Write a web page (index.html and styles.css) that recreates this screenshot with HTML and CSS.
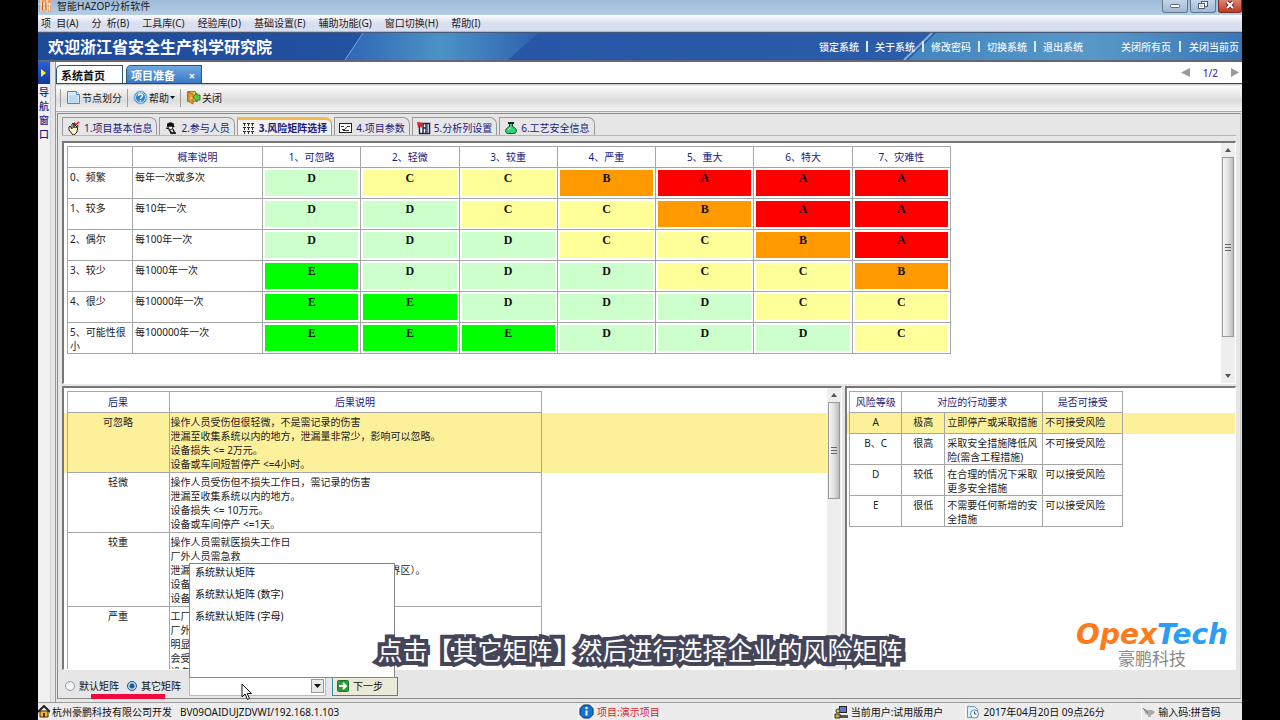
FILE: index.html
```html
<!DOCTYPE html>
<html lang="zh-CN">
<head>
<meta charset="utf-8">
<title>智能HAZOP分析软件</title>
<link rel="stylesheet" href="styles.css">
</head>
<body>
<div class="app">
  <header class="titlebar">
    <svg class="app-icon" width="12" height="12" viewBox="0 0 12 12"><rect width="12" height="12" fill="#e9a06c"/><path d="M2 0v12M5 2v9M8 0v12M10.500 3v8M0 4h12M3 8h8" stroke="#fff0dd" stroke-width="1" fill="none"/><path d="M3.500 2v8M7 3v7" stroke="#b65b2a" fill="none"/></svg>
    <h1 class="title">智能HAZOP分析软件</h1>
    <div class="winbtns">
      <button class="winbtn" aria-label="最小化"><svg width="12" height="10" viewBox="0 0 12 10"><rect x="1.500" y="4.500" width="9" height="3" rx="1" fill="#fff" stroke="#56657a"/></svg></button>
      <button class="winbtn" aria-label="还原"><svg width="12" height="10" viewBox="0 0 12 10"><g fill="#fff" stroke="#4d5c70"><rect x="4.500" y="1.500" width="6" height="5"/><rect x="1.500" y="3.500" width="6" height="5"/><path d="M3.500 6h2"/></g></svg></button>
      <button class="winbtn close" aria-label="关闭窗口"><svg width="12" height="10" viewBox="0 0 12 10"><path d="M3 2l6 6M9 2L3 8" stroke="#6b2a22" stroke-width="4"/><path d="M3 2l6 6M9 2L3 8" stroke="#fff" stroke-width="2"/></svg></button>
    </div>
  </header>
  <nav class="menubar">
    <button>项&nbsp; 目(A)</button><button>分&nbsp; 析(B)</button><button>工具库(C)</button><button>经验库(D)</button><button>基础设置(E)</button><button>辅助功能(G)</button><button>窗口切换(H)</button><button>帮助(I)</button>
  </nav>
  <section class="banner">
    <svg class="banner-art" viewBox="0 0 1204 28" preserveAspectRatio="none">
      <defs><linearGradient id="sky"><stop offset="0" stop-color="#2f66b4"/><stop offset=".5" stop-color="#4c92c6"/><stop offset="1" stop-color="#2e62ae"/></linearGradient>
      <linearGradient id="sky2"><stop offset="0" stop-color="#4385bf"/><stop offset=".55" stop-color="#5898c8"/><stop offset="1" stop-color="#3a77b7"/></linearGradient></defs>
      <path d="M307 28L325 0H500L470 28z" fill="url(#sky)"/><path d="M307 28L325 0" stroke="#7fa9d8"/>
      <path d="M870 28L898 0H1204V28z" fill="url(#sky2)"/><path d="M866 28L894 0" stroke="#83b1dc" stroke-width="2"/>
    </svg>
    <h2>欢迎浙江省安全生产科学研究院</h2>
    <div class="links"><a href="#">锁定系统</a><i></i><a href="#">关于系统</a><i></i><a href="#">修改密码</a><i></i><a href="#">切换系统</a><i></i><a href="#">退出系统</a></div>
    <div class="links pages"><a href="#">关闭所有页</a><i></i><a href="#">关闭当前页</a></div>
  </section>
  <div class="body">
    <aside class="side">
      <button class="expand" aria-label="展开"><svg width="6" height="8" viewBox="0 0 6 8"><path d="M0 0l5 4-5 4z" fill="#f4f03a"/></svg></button>
      <span>导</span><span>航</span><span>窗</span><span>口</span>
    </aside>
    <main class="work">
      <div class="doctabs">
        <button class="doctab home">系统首页</button>
        <button class="doctab current">项目准备<span>×</span></button>
        <div class="pager"><button aria-label="上一页"><svg width="9" height="10" viewBox="0 0 9 10"><path d="M9 0v9L0 4.500z" fill="#9a9a9a"/></svg></button><span>1/2</span><button aria-label="下一页"><svg width="9" height="10" viewBox="0 0 9 10"><path d="M0 0v9l8-4.500z" fill="#9a9a9a"/></svg></button></div>
      </div>
      <div class="toolbar">
        <button><svg width="15" height="15" viewBox="0 0 15 15"><path d="M1.500 1.500h9l3 3v9h-12z" fill="#d5ebfc" stroke="#4c85bf"/><path d="M10.500 1.500v3h3" fill="#fff" stroke="#4c85bf"/><path d="M3 6h9M3 8h9M3 10h9M3 12h9" stroke="#a2cbed"/></svg>节点划分</button>
        <button><svg width="15" height="15" viewBox="0 0 15 15"><circle cx="7.500" cy="7.500" r="6.500" fill="#2b82cf" stroke="#93bde2"/><circle cx="7.500" cy="7.500" r="5" fill="none" stroke="#d2e9fa"/><path d="M5.500 6c0-3 4.200-2.600 4 0c-.2 1.300-2 1.300-2 3M7.500 10v1.500" fill="none" stroke="#fff" stroke-width="1.500"/></svg>帮助<svg class="caret" width="5" height="3" viewBox="0 0 5 3"><path d="M0 0h5L2.500 3z" fill="#111"/></svg></button>
        <button><svg width="15" height="15" viewBox="0 0 15 15"><path d="M1.500 1.500h8v10h-8z" fill="#f5c052" stroke="#a87424"/><path d="M2 2l5 2v10l-5-3z" fill="#e39b2b" stroke="#a87424"/><circle cx="5.500" cy="8" r="1" fill="#fff2a8"/><path d="M7 7l4-4v2h3v5h-3v2z" fill="#62c544" stroke="#2d8b2c"/></svg>关闭</button>
      </div>
      <div class="page">
        <div class="steps">
          <button class="step"><svg width="14" height="14" viewBox="0 0 14 14"><path d="M2 6l1-1 2 3V3l1-1 1 1v4-5l1 0 1 5 1-3h1l-1 7-3 3H6L2 9z" fill="#fff6c8" stroke="#222"/><path d="M9 4l3-3" stroke="#d22" stroke-width="2"/><path d="M8 6l4-4" stroke="#e7c72c"/></svg>1.项目基本信息</button>
          <button class="step"><svg width="14" height="14" viewBox="0 0 14 14"><path d="M3 5c0-5 7-5 7 0l1 1-8 0z" fill="#111"/><circle cx="6.500" cy="6" r="2.500" fill="#fff" stroke="#111"/><path d="M4 3h5v2H4zM2 7l3 1M5 9l4 4M9 8l2 5M6 12h6" fill="#111" stroke="#111" stroke-width="1.300"/></svg>2.参与人员</button>
          <button class="step active"><svg width="14" height="14" viewBox="0 0 14 14"><path d="M1 2.500h3M5 2.500h3M9 2.500h3M1 6.500h3M5 6.500h3M9 6.500h3M1 10.500h3M5 10.500h3M9 10.500h3" stroke="#222"/><path d="M2.500 2v3M6.500 2v3M10.500 2v3M2.500 6v3M6.500 6v3M10.500 6v3M2.500 10v3M6.500 10v3M10.500 10v3" stroke="#333"/></svg>3.风险矩阵选择</button>
          <button class="step"><svg width="14" height="14" viewBox="0 0 14 14"><rect x=".5" y="2.500" width="12" height="9" fill="#fff" stroke="#222"/><path d="M2 5.500h3M3 8.500h3M6 7.500l2-1M8 5.500h3M4 9.500h6" stroke="#333"/></svg>4.项目参数</button>
          <button class="step"><svg width="14" height="14" viewBox="0 0 14 14"><path d="M2.500 2.500h10v10h-10zM6 2v10M9 2v10M6 7h3" fill="#fff" stroke="#20205c" stroke-width="1.500"/><path d="M0 1l6 1-1 5-2-2-2 2z" fill="#e42222"/><path d="M10.500 3v9" stroke="#a85ad2"/></svg>5.分析列设置</button>
          <button class="step"><svg width="14" height="14" viewBox="0 0 14 14"><path d="M5.500 2.500h3v3c5 2 5 7 1 7h-5c-4 0-4-5 1-7z" fill="#2ed77b" stroke="#163e28"/><path d="M4 2h6" stroke="#222" stroke-width="2"/><path d="M4 9c1-2 2-2 3-2" stroke="#c5ffdc" fill="none"/></svg>6.工艺安全信息</button>
        </div>
        <section class="pane top">
          <div class="view">
            <table class="grid matrix">
              <colgroup><col class="c-level"><col class="c-prob"><col><col><col><col><col><col><col></colgroup>
              <tr><th></th><th>概率说明</th><th>1、可忽略</th><th>2、轻微</th><th>3、较重</th><th>4、严重</th><th>5、重大</th><th>6、特大</th><th>7、灾难性</th></tr>
              <tr><td>0、频繁</td><td>每年一次或多次</td><td class="r"><b class="d">D</b></td><td class="r"><b class="c">C</b></td><td class="r"><b class="c">C</b></td><td class="r"><b class="b">B</b></td><td class="r"><b class="a">A</b></td><td class="r"><b class="a">A</b></td><td class="r"><b class="a">A</b></td></tr>
              <tr><td>1、较多</td><td>每10年一次</td><td class="r"><b class="d">D</b></td><td class="r"><b class="d">D</b></td><td class="r"><b class="c">C</b></td><td class="r"><b class="c">C</b></td><td class="r"><b class="b">B</b></td><td class="r"><b class="a">A</b></td><td class="r"><b class="a">A</b></td></tr>
              <tr><td>2、偶尔</td><td>每100年一次</td><td class="r"><b class="d">D</b></td><td class="r"><b class="d">D</b></td><td class="r"><b class="d">D</b></td><td class="r"><b class="c">C</b></td><td class="r"><b class="c">C</b></td><td class="r"><b class="b">B</b></td><td class="r"><b class="a">A</b></td></tr>
              <tr><td>3、较少</td><td>每1000年一次</td><td class="r"><b class="e">E</b></td><td class="r"><b class="d">D</b></td><td class="r"><b class="d">D</b></td><td class="r"><b class="d">D</b></td><td class="r"><b class="c">C</b></td><td class="r"><b class="c">C</b></td><td class="r"><b class="b">B</b></td></tr>
              <tr><td>4、很少</td><td>每10000年一次</td><td class="r"><b class="e">E</b></td><td class="r"><b class="e">E</b></td><td class="r"><b class="d">D</b></td><td class="r"><b class="d">D</b></td><td class="r"><b class="d">D</b></td><td class="r"><b class="c">C</b></td><td class="r"><b class="c">C</b></td></tr>
              <tr><td>5、可能性很小</td><td>每100000年一次</td><td class="r"><b class="e">E</b></td><td class="r"><b class="e">E</b></td><td class="r"><b class="e">E</b></td><td class="r"><b class="d">D</b></td><td class="r"><b class="d">D</b></td><td class="r"><b class="d">D</b></td><td class="r"><b class="c">C</b></td></tr>
            </table>
          </div>
          <div class="scroll"><i class="up"></i><div class="thumb tall"></div><i class="down"></i></div>
        </section>
        <div class="lower">
          <section class="pane left">
            <div class="view">
              <table class="grid wide effects">
                <colgroup><col class="c-edge"><col class="c-name"><col class="c-desc"><col></colgroup>
                <tr><td class="blank"></td><th>后果</th><th>后果说明</th><td class="blank"></td></tr>
                <tr class="hit"><td class="blank"></td><td class="mid">可忽略</td><td>操作人员受伤但很轻微，不是需记录的伤害<br>泄漏至收集系统以内的地方，泄漏量非常少，影响可以忽略。<br>设备损失 &lt;= 2万元。<br>设备或车间短暂停产 &lt;=4小时。</td><td class="blank"></td></tr>
                <tr><td class="blank"></td><td class="mid">轻微</td><td>操作人员受伤但不损失工作日，需记录的伤害<br>泄漏至收集系统以内的地方。<br>设备损失 &lt;= 10万元。<br>设备或车间停产 &lt;=1天。</td><td class="blank"></td></tr>
                <tr><td class="blank"></td><td class="mid">较重</td><td>操作人员需就医损失工作日<br>厂外人员需急救<br>泄漏至收集系统以外的地方（但并未超出工厂的边界区）。<br>设备<br>设备</td><td class="blank"></td></tr>
                <tr><td class="blank"></td><td class="mid">严重</td><td>工厂<br>厂外<br>明显<br>会受<br>设备</td><td class="blank"></td></tr>
              </table>
            </div>
            <div class="scroll"><i class="up"></i><div class="thumb short"></div></div>
          </section>
          <section class="pane right">
            <div class="view">
              <table class="grid wide levels">
                <colgroup><col class="c-edge"><col class="c-rank"><col class="c-grade"><col class="c-act"><col class="c-ok"><col></colgroup>
                <tr><td class="blank"></td><th>风险等级</th><th colspan="2">对应的行动要求</th><th>是否可接受</th><td class="blank"></td></tr>
                <tr class="hit"><td class="blank"></td><td class="mid">A</td><td class="mid">极高</td><td>立即停产或采取措施</td><td>不可接受风险</td><td class="blank"></td></tr>
                <tr><td class="blank"></td><td class="mid">B、C</td><td class="mid">很高</td><td>采取安全措施降低风险(需含工程措施)</td><td>不可接受风险</td><td class="blank"></td></tr>
                <tr><td class="blank"></td><td class="mid">D</td><td class="mid">较低</td><td>在合理的情况下采取更多安全措施</td><td>可以接受风险</td><td class="blank"></td></tr>
                <tr><td class="blank"></td><td class="mid">E</td><td class="mid">很低</td><td>不需要任何新增的安全措施</td><td>可以接受风险</td><td class="blank"></td></tr>
              </table>
            </div>
            <div class="brand"><strong><span>Opex</span><em>Tech</em></strong><small>豪鹏科技</small></div>
          </section>
        </div>
        <form class="actions">
          <label><input type="radio" name="m">默认矩阵</label>
          <label class="marked"><input type="radio" name="m" checked>其它矩阵</label>
          <div class="combo">
            <select aria-label="矩阵"><option></option></select>
            <svg class="drop" width="13" height="14" viewBox="0 0 13 14"><rect x=".5" y=".5" width="12" height="13" fill="#eceae6" stroke="#999"/><path d="M3 5h7L6.500 9z" fill="#111"/></svg>
            <ul class="options"><li>系统默认矩阵</li><li>系统默认矩阵 (数字)</li><li>系统默认矩阵 (字母)</li></ul>
            <svg class="cursor" width="12" height="18" viewBox="0 0 12 18"><path d="M1 1v13l3-3 2.500 5.500 2-1L6.200 10.500H10.500z" fill="#fff" stroke="#111"/></svg>
          </div>
          <button type="button" class="next"><svg width="12" height="12" viewBox="0 0 12 12"><rect x=".5" y=".5" width="11" height="11" rx="1" fill="#2f9a38" stroke="#1d7426"/><path d="M2 6h7M6 3l3 3-3 3" fill="none" stroke="#fff" stroke-width="2"/></svg>下一步</button>
        </form>
      </div>
    </main>
  </div>
  <footer class="status">
    <div class="s1"><svg width="12" height="13" viewBox="0 0 12 13"><path d="M2 6h8v6H2z" fill="#f2b92c" stroke="#46310a"/><path d="M0 7l6-6 6 6" fill="none" stroke="#222" stroke-width="2"/><path d="M5 8h2v4H5z" fill="#5c3310"/></svg><span>杭州豪鹏科技有限公司开发</span><span class="code">BV09OAIDUJZDVWI/192.168.1.103</span></div>
    <div class="s2"><svg width="15" height="15" viewBox="0 0 15 15"><path d="M4.500 1h6l3.500 3.500v6L10.500 14h-6L1 10.500v-6z" fill="#1273d4" stroke="#0b2b62"/><circle cx="7.500" cy="4" r="1.200" fill="#fff"/><path d="M7.500 6.500v5" stroke="#fff" stroke-width="2"/></svg>项目:演示项目</div>
    <div class="s3"><svg width="14" height="14" viewBox="0 0 14 14"><rect x="5.500" y="1.500" width="7" height="6" fill="#5a79d6" stroke="#222"/><path d="M6 10h8v3H6z" fill="#555"/><circle cx="4" cy="6" r="2" fill="#f2c64a" stroke="#333"/><path d="M1 13V9h5v4z" fill="#d8a52b" stroke="#333"/></svg>当前用户:试用版用户</div>
    <div class="s4"><svg width="14" height="14" viewBox="0 0 14 14"><path d="M1.500 1.500h7l3 3v8h-10z" fill="#dcecfb" stroke="#7796b8"/><circle cx="8.500" cy="9" r="4" fill="#fff" stroke="#5f8fc0"/><path d="M8.500 6.500V9h2" fill="none" stroke="#356"/></svg>2017年04月20日 09点26分</div>
    <div class="s5"><svg width="13" height="14" viewBox="0 0 13 14"><path d="M1 3l4 2h5l3 2-3 3H5L3 8z" fill="#aaa"/><path d="M1 3l5 5M6 11h3" stroke="#777"/></svg>输入码:拼音码</div>
  </footer>
  <p class="caption">点击【其它矩阵】然后进行选择企业的风险矩阵</p>
</div>
</body>
</html>
```
FILE: styles.css
```css
* { box-sizing: border-box; }
html, body { height: 100%; }
body {
  margin: 0;
  padding: 0 38px;
  background: #000;
  color: #222;
  font: 10px/14px "Noto Sans", "Noto Sans CJK SC", sans-serif;
}
button, select, input { font: inherit; color: inherit; margin: 0; }
button { border: 0; padding: 0; background: none; white-space: nowrap; }
svg { display: block; flex: none; }
h1, h2, p, ul { margin: 0; padding: 0; font: inherit; }
.app { position: relative; height: 100vh; display: flex; flex-direction: column; background: #e6e6e6; overflow: hidden; }

.titlebar { display: flex; height: 15px; background: linear-gradient(#9dbbd9, #b6cde6); padding-left: 1px; }
.app-icon { margin-right: 6px; }
.title { line-height: 12px; flex: 1; }
.winbtns { display: flex; gap: 2px; align-items: flex-start; }
.winbtn { width: 26px; height: 13px; display: flex; justify-content: center; border: 1px solid #62778f; border-top: 0; border-radius: 0 0 3px 3px; background: linear-gradient(#c3d5e8, #9fb9d4); }
.winbtn.close { width: 24px; background: linear-gradient(#dc8271, #c03a24); border-color: #7a2c20; }

.menubar { display: flex; gap: 13px; height: 17px; padding-left: 3px; background: linear-gradient(#fcfdff, #dadff0 50%, #dadff0); border-bottom: 1px solid #b6b9c8; }

.banner { position: relative; display: flex; align-items: center; height: 30px; padding: 0 3px 0 10px; border-top: 1px solid #47597a; border-bottom: 2px solid #667; background: linear-gradient(90deg, #1e4a9a, #2656a5 40%, #2f62ad); color: #fff; }
.banner-art { position: absolute; inset: 0; width: 100%; height: 100%; }
.banner h2 { position: relative; flex: 1; font-size: 16px; font-weight: 700; line-height: 24px; }
.links { position: relative; display: flex; align-items: center; gap: 7px; font-weight: 500; }
.links a { color: #eef5ff; text-decoration: none; }
.links i { width: 2px; height: 11px; background: #dbe9f7; }
.links.pages { margin-left: 38px; gap: 8px; }

.body { flex: 1; min-height: 0; display: flex; }
.side { width: 13px; display: flex; flex-direction: column; align-items: center; background: #f1f1f1; border-right: 1px solid #d0d0d0; color: #1a1a8a; font-weight: 500; }
.side span { height: 14px; }
.expand { width: 100%; height: 22px; margin-bottom: 1px; display: flex; align-items: center; justify-content: center; background: linear-gradient(#2a5fd0, #12389c); }
.work { flex: 1; min-width: 0; display: flex; flex-direction: column; margin-left: 4px; border-left: 1px solid #999; }

.doctabs { display: flex; align-items: flex-end; gap: 3px; height: 22px; background: #fff; border-bottom: 1px solid #444; }
.doctab { display: flex; align-items: center; justify-content: space-between; height: 18px; padding: 2px 6px 0 4px; font-size: 11px; font-weight: 700; border: 1px solid #2a5878; border-bottom: 0; border-top-left-radius: 5px; }
.home { width: 67px; color: #111; }
.current { width: 76px; color: #fff; background: linear-gradient(#6fa8e0, #3b78c4); }
.pager { margin-left: auto; height: 100%; display: flex; align-items: center; gap: 13px; padding-right: 2px; color: #4a36b8; font-weight: 500; }

.toolbar { display: flex; align-items: center; height: 28px; padding: 0 4px; background: linear-gradient(#b8b8b8, #fcfcfc 2px, #dcdcdc 60%, #f4f4f4); border-bottom: 1px solid #aaa; }
.toolbar button { display: flex; align-items: center; gap: 1px; height: 18px; padding: 0 5px; border-left: 1px solid #9c9c9c; }

.page { flex: 1; min-height: 0; display: flex; flex-direction: column; margin: 1px 1px 3px 1px; border: 1px solid #8a8a8a; border-right-color: #c8c8c8; padding: 3px 4px 0; }
.steps { display: flex; gap: 2px; height: 19px; margin: 0 0 5px; border-bottom: 1px solid #b5b5b5; }
.step { display: flex; align-items: center; gap: 3px; padding: 2px 4px 0 4px; border: 1px solid #999; border-bottom: 0; border-top-right-radius: 7px; color: #1a1a80; }
.step.active { background: #f2f2f2; border-top: 3px solid #f3bb45; padding-top: 0; font-weight: 700; }

.pane { display: flex; min-height: 0; background: #fff; border: 2px solid #777; border-right: 1px solid #fff; border-bottom: 1px solid #fff; }
.view { flex: 1; min-width: 0; overflow: hidden; }
.top { flex: 240 1 0; }
.top .view { padding: 3px 0 0 3px; }
.lower { flex: 284 1 0; min-height: 0; display: flex; gap: 3px; margin-top: 2px; }
.left { flex: 2 1 0; }
.right { position: relative; flex: 1 1 0; }
.lower .view { padding-top: 3px; }

.grid { border-collapse: collapse; table-layout: fixed; }
.grid.wide { width: 100%; }
.matrix { width: 884px; }
.grid th, .grid td { border: 1px solid #a6a6a6; padding: 2px 2px 0; vertical-align: top; height: 31px; }
.grid th { height: 21px; padding: 3px 2px; font-weight: 400; color: #1a1a80; text-align: center; }
.grid td.blank { border-width: 0; padding: 0; height: auto; }
.mid { text-align: center; }
.grid td.r { padding: 1px; text-align: center; }
.r b { display: block; height: 28px; border: 1px solid #fff; font: 700 12px/16px "Liberation Serif", serif; color: #111; }
.a { background: #f00; }
.b { background: #f90; }
.c { background: #ff9; }
.d { background: #cfc; }
.e { background: #0f0; }
.hit { background: #fdf09a; }
.c-edge { width: 3px; }
.c-level { width: 65px; }
.c-prob { width: 130px; }
.c-name { width: 102px; }
.c-desc { width: 372px; }
.c-rank { width: 52px; }
.c-grade { width: 43px; }
.c-act { width: 98px; }
.c-ok { width: 80px; }
.grid.effects td { padding: 2px 1px 1px; }
.grid.levels .hit td { height: 21px; }

.scroll { width: 14px; display: flex; flex-direction: column; align-items: center; background: #eee; padding: 5px 1px; }
.up, .down { border: 3px solid transparent; }
.up { border-top: 0; border-bottom: 4px solid #555; margin-bottom: 5px; }
.down { border-bottom: 0; border-top: 4px solid #555; margin-top: auto; }
.thumb { width: 100%; display: flex; align-items: center; justify-content: center; border: 1px solid #999; background: linear-gradient(90deg, #f5f5f5, #e0e0e0 50%, #bbb); }
.thumb::after { content: ""; width: 6px; height: 7px; background: repeating-linear-gradient(#666 0 1px, transparent 1px 3px); }
.tall { height: 180px; }
.short { height: 97px; }

.brand { position: absolute; right: 7px; bottom: 2px; display: flex; flex-direction: column; align-items: center; }
.brand strong { font: italic 700 28px/30px "DejaVu Sans", sans-serif; color: #ff7a1c; }
.brand em { color: #2a9df4; }
.brand small { font-size: 17px; line-height: 17px; color: #888; }

.actions { display: flex; align-items: center; height: 28px; padding: 4px 0 0 3px; }
.actions label { display: flex; align-items: center; gap: 4px; margin-right: 8px; color: #111; }
.marked { position: relative; }
.marked::after { content: ""; position: absolute; left: -36px; top: 15px; width: 74px; height: 5px; background: #ee0a3c; }
.actions input { appearance: none; width: 10px; height: 10px; border: 1px solid #8c9aa8; border-radius: 50%; background: #f2f6fa; }
.actions input:checked { border-color: #24507c; background: radial-gradient(#1a5a94 0 2px, #b9dcf2 3px); }
.combo { position: relative; width: 137px; height: 19px; margin-right: 6px; }
.combo select { appearance: none; width: 100%; height: 100%; border: 1px solid #bbb; border-radius: 0; background: #fff; }
.drop { position: absolute; right: 2px; top: 2px; pointer-events: none; }
.options { position: absolute; left: 0; bottom: 18px; width: 206px; height: 115px; background: #fff; border: 1px solid #888; list-style: none; }
.options li { height: 22px; padding: 1px 5px 0; color: #111; }
.cursor { position: absolute; left: 52px; top: 6px; }
.next { display: flex; align-items: center; gap: 4px; width: 66px; height: 19px; padding: 0 4px; border: 1px solid #3b8aa8; background: #ece9d8; color: #111; }

.status { display: flex; height: 18px; border-top: 1px solid #999; background: #ececec; color: #111; }
.status div { display: flex; align-items: center; gap: 3px; border-left: 1px solid #fff; }
.status .s1 { flex: 541; border-left: 0; gap: 2px; }
.code { margin-left: 6px; }
.s2 { flex: 254; }
.status .s2 { color: #d8202c; }
.s3 { flex: 132; }
.s4 { flex: 175; }
.s5 { flex: 100; }

.caption { position: absolute; left: 0; right: 0; bottom: 52px; text-align: center; font-size: 25px; line-height: 36px; font-weight: 400; color: #fff; -webkit-text-stroke: 8px #45455a; stroke-linejoin: round; paint-order: stroke fill; pointer-events: none; }
```
